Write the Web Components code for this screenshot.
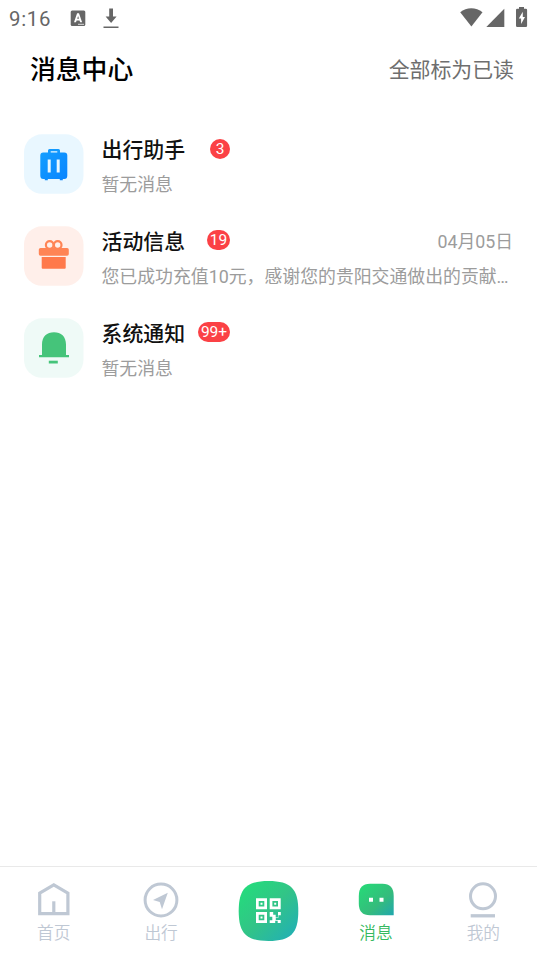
<!DOCTYPE html>
<html lang="zh-CN">
<head>
<meta charset="utf-8">
<title>消息中心</title>
<style>
html,body{margin:0;height:100%;background:#fff}
body{font-family:Roboto,"Noto Sans CJK SC",sans-serif;overflow:hidden}
</style>
</head>
<body>
<message-app></message-app>
<script>
const define = (name, html) => {
  const t = document.createElement('template');
  t.innerHTML = html;
  customElements.define(name, class extends HTMLElement {
    constructor() {
      super();
      this.attachShadow({mode: 'open'}).append(t.content.cloneNode(true));
    }
  });
};

define('status-bar', `
<style>
:host{display:flex;align-items:center;height:36px;padding:0 9px;box-sizing:border-box;color:#666}
.time{font-size:20.4px;line-height:36px;width:61px;letter-spacing:.7px;padding-top:2px;box-sizing:border-box}
svg{display:block;fill:currentColor;flex:none}
.gap{flex:1}
</style>
<span class="time">9:16</span>
<svg width="50" height="36" viewBox="70 0 50 36">
  <rect x="70.700" y="10.500" width="14.600" height="15.500" rx="1.500"/>
  <path d="M74 22.300 77.100 13.300h1.900L82.100 22.300h-2l-.6-1.800h-2.900l-.6 1.800zM77.200 18.800h1.800l-.9-2.900z" fill="#fff" fill-rule="evenodd"/>
  <path d="M78 23.800h6v1h-6z" fill="#ddd"/>
  <path d="M109.200 8.500h3.800v8h3.600l-5.500 6.600-5.500-6.600h3.600zM103.500 26.500h15v1.600h-15z"/>
</svg>
<span class="gap"></span>
<svg width="70" height="36" viewBox="458 0 70 36">
  <path d="M460.200 12.300C466.500 7 476 7 482.500 12.300L471.400 26.400Z"/>
  <path d="M504.300 8.800V26.900H486.300Z"/>
  <path d="M519 8.700v-1.700h5v1.700h1.900q1.200 0 1.200 1.200v15.900q0 1.200-1.200 1.200h-8.700q-1.200 0-1.200-1.200v-15.900q0-1.200 1.200-1.200z"/>
  <path d="M522.800 11.700l-4 6.900h2.300v5.500l3.900-7.200h-2.200z" fill="#fff"/>
</svg>`);

define('page-header', `
<style>
:host{display:flex;align-items:center;justify-content:space-between;height:66px;padding:0 23px 0 30px;box-sizing:border-box}
.title{font-size:25.8px;font-weight:500;color:#000;margin-top:-4px}
.action{font-size:20.9px;color:#6e6e6e;margin-top:-2px}
</style>
<span class="title"><slot></slot></span><span class="action"><slot name="action"></slot></span>`);

define('message-item', `
<style>
:host{display:flex;height:60px;padding:0 24px;gap:17.5px}
.icon{width:60px;height:60px;flex:none}
.body{flex:1;min-width:0;display:flex;flex-direction:column;gap:5px}
.top{display:flex;align-items:center;height:32px}
.head{display:flex;align-items:center;justify-content:space-between;width:128.500px}
.title{font-size:20.9px;font-weight:500;color:#111;line-height:32px}
.badge{font-size:15.5px;line-height:20px;height:20px;min-width:20px;box-sizing:border-box;border-radius:10px;background:#fb4145;color:#fff;text-align:center;margin-top:-3px}
:host(.mid) .badge{width:23px}
:host(.wide) .badge{width:32px}
.date{margin-left:auto;font-size:17.800px;color:#9c9c9c;line-height:32px}
.sub{font-size:17.880px;line-height:28px;color:#9c9c9c;white-space:nowrap}
</style>
<div class="icon"><slot name="icon"></slot></div>
<div class="body">
  <div class="top"><div class="head"><span class="title"><slot name="title"></slot></span><span class="badge"><slot name="badge"></slot></span></div><span class="date"><slot name="date"></slot></span></div>
  <div class="sub"><slot></slot></div>
</div>`);

define('tab-item', `
<style>
:host{display:flex;flex-direction:column;align-items:center;flex:1;color:#bfc8d4;padding-top:13px;box-sizing:border-box}
:host(.active){color:#35b960}
.label{font-size:16.7px;line-height:24px;font-weight:350;margin-top:4px}
</style>
<slot name="icon"></slot><span class="label"><slot></slot></span>`);

define('tab-bar', `
<style>
:host{display:flex;height:90px;border-top:1px solid #e9e9e9;box-sizing:border-box;background:#fff}
svg{display:block}
</style>
<tab-item><svg slot="icon" width="40" height="38" viewBox="33.500 880 40 38" fill="none" stroke="#bfc8d4" stroke-width="3.200"><path d="M39.200 893.200 53.300 884.800 67.400 893.200V913.700H39.200Z"/><path d="M53.300 901.300v12"/></svg>首页</tab-item>
<tab-item><svg slot="icon" width="40" height="38" viewBox="141 880 40 38"><circle cx="161" cy="900" r="15.900" fill="none" stroke="#bfc8d4" stroke-width="3"/><path d="M167.800 892.800 153 900 159.700 902 162 909.300Z" fill="#bfc8d4"/></svg>出行</tab-item>
<tab-item><svg slot="icon" width="62" height="62" viewBox="238 880 62 62">
 <defs><linearGradient id="q" x1="0" y1="0" x2="1" y2="1"><stop offset=".08" stop-color="#24dc7c"/><stop offset=".5" stop-color="#32c487"/><stop offset=".93" stop-color="#22b0b4"/></linearGradient></defs>
 <path d="M268.500 881C291 881 298.300 889 298.300 911S291 941 268.500 941 238.700 933 238.700 911 246 881 268.500 881Z" fill="url(#q)"/>
 <g fill="#fff"><path fill-rule="evenodd" d="M256 898.200h11v11h-11zM258.700 900.900h5.600v5.600h-5.600zM269.700 898.200h11v11h-11zM272.400 900.900h5.600v5.600h-5.600zM256 912h11v11h-11zM258.700 914.700h5.600v5.600h-5.600z"/>
 <path d="M260.500 902.700h2v2h-2zM274.200 902.700h2v2h-2zM260.500 916.500h2v2h-2zM269.700 912h3.500v2.700h2.500v2.500h2.300v-5.200h2.800v3.300h-2.400v2.400h-2.600v2.400h4.900v2.900h-3v-2.200h-2.500v2.200h-5.500v-2.800h2.600v-3.500h-2.600z"/></g></svg></tab-item>
<tab-item class="active"><svg slot="icon" width="40" height="38" viewBox="356 880 40 38">
 <defs><linearGradient id="m" x1="0" y1="0" x2="1" y2="1"><stop offset=".1" stop-color="#27d778"/><stop offset=".6" stop-color="#35bc7c"/><stop offset="1" stop-color="#20a7af"/></linearGradient></defs>
 <path d="M370 883.700H382.500Q393.700 883.700 393.700 896V915.300H370Q358.800 915.300 358.800 903.500V896Q358.800 883.700 370 883.700Z" fill="url(#m)"/><path d="M369 897.700h4v4h-4zM379.500 897.700h4v4h-4z" fill="#fff"/></svg>消息</tab-item>
<tab-item><svg slot="icon" width="40" height="38" viewBox="463 880 40 38" fill="none" stroke="#bfc8d4" stroke-width="3"><circle cx="483" cy="896.300" r="12.500"/><path d="M470.700 915.800H495" stroke-width="3.300"/></svg>我的</tab-item>`);

define('message-app', `
<style>
:host{display:flex;flex-direction:column;height:956px;width:537px}
.list{flex:1;display:flex;flex-direction:column;gap:31.800px;padding-top:32px}
svg{display:block}
</style>
<status-bar></status-bar>
<page-header>消息中心<span slot="action">全部标为已读</span></page-header>
<div class="list">
<message-item>
 <svg slot="icon" width="60" height="60" viewBox="0 0 60 60"><defs><linearGradient id="b" x1="0" y1="0" x2="1" y2="1"><stop stop-color="#139eff"/><stop offset="1" stop-color="#0a84ff"/></linearGradient></defs><rect y=".3" width="59.500" height="59.500" rx="18" fill="#e9f7ff"/><path d="M24 19v-2.500q0-1.500 1.500-1.500h9q1.500 0 1.500 1.500v2.500h-2.700v-1.700h-6.600v1.700z" fill="#139aff"/><path d="M19 18.500h21q3 0 3 3v20q0 3.500-3 3.500h-1.500v1.200h-3v-1.200h-12v1.200h-3v-1.200h-1.500q-3 0-3-3.500v-20q0-3 3-3z" transform="translate(.3)" fill="url(#b)"/><path d="M23.700 25.500h3v13h-3zM32.700 25.500h3v13h-3z" fill="#e9f7ff"/></svg>
 <span slot="title">出行助手</span><span slot="badge">3</span>暂无消息
</message-item>
<message-item class="mid">
 <svg slot="icon" width="60" height="60" viewBox="0 0 60 60"><rect y=".3" width="59.500" height="59.500" rx="18" fill="#ffefea"/><g fill="none" stroke="#ff8455" stroke-width="2.200"><circle cx="25.700" cy="19" r="3.800"/><circle cx="33.700" cy="19" r="3.800"/></g><rect x="14.800" y="22" width="30" height="7.800" rx="1.700" fill="#ff8455"/><path d="M17.700 31h24v10.700q0 1-1 1h-22q-1 0-1-1z" fill="#ff794b"/></svg>
 <span slot="title">活动信息</span><span slot="badge">19</span><span slot="date">04月05日</span><span>您已成功充值10元，感谢您的贵阳交通做出的贡献…</span>
</message-item>
<message-item class="wide">
 <svg slot="icon" width="60" height="60" viewBox="0 0 60 60"><rect y=".3" width="59.500" height="59.500" rx="18" fill="#effaf7"/><path d="M18 37V26.500C18 18.500 23 14.300 30 14.300S42 18.500 42 26.500V37H45v2.300H15V37Z" fill="#45c47a"/><path d="M24.800 42.700h9v2.800h-9z" fill="#45c47a"/></svg>
 <span slot="title">系统通知</span><span slot="badge">99+</span>暂无消息
</message-item>
</div>
<tab-bar></tab-bar>`);
</script>
</body>
</html>
